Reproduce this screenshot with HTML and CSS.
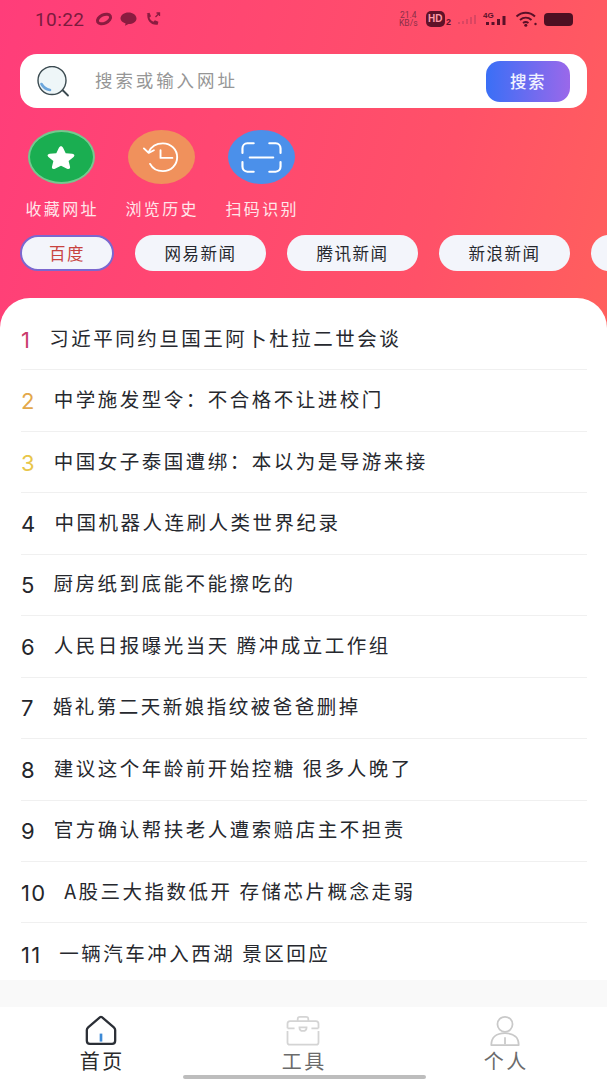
FILE: index.html
```html
<!DOCTYPE html>
<html lang="zh-CN">
<head>
<meta charset="utf-8">
<title>首页</title>
<link rel="stylesheet" href="styles.css">
</head>
<body>
<div class="page">
  <header class="hero">
    <div class="status">
      <div class="status-left">
        <span class="time">10:22</span>
        <svg class="si" width="18" height="14" viewBox="0 0 18 14"><ellipse cx="9" cy="7" rx="7" ry="4.200" transform="rotate(-25 9 7)" fill="none" stroke="#8a1c40" stroke-width="3"/></svg>
        <svg class="si" width="17" height="14" viewBox="0 0 17 14"><path d="M8.500 0.500c4.400 0 8 2.600 8 6s-3.600 5.600-8 5.600l-3.500 1.700.6-2.400C2.600 10.400.5 8.700.5 6.500c0-3.400 3.600-6 8-6z" fill="#8a1c40"/></svg>
        <svg class="si" width="18" height="15" viewBox="0 0 17 15"><path d="M2 1.500 5 .8l1.500 3.500-1.600 1.400c.8 1.800 2.200 3.200 4 4l1.500-1.500 3.500 1.500-.7 3c-6.500 1-11.500-4.500-10.200-11.700z" fill="#8a1c40"/><path d="M11 5l4-4M12 1h3v3" fill="none" stroke="#8a1c40" stroke-width="1.300"/></svg>
      </div>
      <div class="status-right">
        <span class="speed">21.4<br>KB/s</span>
        <span class="hd"><span class="hd-box">HD</span><span class="hd-num">2</span></span>
        <svg width="20" height="10" viewBox="0 0 20 10" class="faint"><path d="M1 8h2v2H1zM5 7h2v3H5zM9 5h2v5H9zM13 3h2v7h-2zM17 1h2v9h-2z" fill="#c2405f"/></svg>
        <svg width="26" height="16" viewBox="0 0 26 16"><text x="0" y="7" class="net">4G</text><path d="M3 11h3v3H3zM8.500 11h3v3h-3zM14 8h3v6h-3zM19.500 5h3v9h-3z" fill="#5a1028"/></svg>
        <svg width="23" height="16" viewBox="0 0 23 16"><path d="M1.500 5.500c5.500-5 13-5 18.500 0M5 9c3.500-3 8-3 11.500 0M8 12c1.600-1.200 3.800-1.200 5.500 0" fill="none" stroke="#5a1028" stroke-width="2"/><circle cx="10.800" cy="14.300" r="1.500" fill="#5a1028"/><circle cx="20.500" cy="13" r="1.200" fill="#5a1028"/></svg>
        <span class="battery"></span>
      </div>
    </div>

    <div class="search">
      <svg class="search-icon" width="36" height="32" viewBox="3 0 36 32">
        <circle cx="18" cy="14.500" r="14.500" fill="#eef6f8"/>
        <circle cx="18" cy="14.500" r="14" fill="none" stroke="#3b4a50" stroke-width="1.400"/>
        <path d="M29 24.500l5 5" stroke="#3b4a50" stroke-width="1.800" stroke-linecap="round"/>
        <path d="M7.500 18c2 3.600 4.800 5.300 8.500 6" fill="none" stroke="#6ba6dc" stroke-width="2.600" stroke-linecap="round"/>
      </svg>
      <span class="placeholder">搜索或输入网址</span>
      <button class="search-btn">搜索</button>
    </div>

    <div class="actions">
      <div class="action">
        <div class="circle c-green">
          <svg width="32" height="25" viewBox="0 0 34 30" preserveAspectRatio="none"><path d="M17 1.500c1 0 1.700.7 2.200 1.800l2.800 6.500 7 .8c2.400.3 3 2.100 1.400 3.700l-5.300 4.800 1.500 7c.4 2.200-1.200 3.400-3.200 2.300L17 24.800l-6.400 3.600c-2 1.100-3.600-.1-3.200-2.300l1.500-7L3.600 14.300C2 12.700 2.600 10.900 5 10.600l7-.8 2.800-6.500c.5-1.100 1.200-1.800 2.200-1.800z" fill="#fff"/></svg>
        </div>
        <span class="action-label">收藏网址</span>
      </div>
      <div class="action">
        <div class="circle c-orange">
          <svg width="38" height="31" viewBox="0 0 40 34" preserveAspectRatio="none"><path d="M7 11C10 4.500 16 1.500 22 1.500c8.500 0 15 6.800 15 15.200S30.500 32 22 32c-6 0-11-3-13.500-8" fill="none" stroke="#fff" stroke-width="2" stroke-linecap="round"/><path d="M2 7l5 5 5.500-3" fill="none" stroke="#fff" stroke-width="2" stroke-linecap="round" stroke-linejoin="round"/><path d="M19.500 9v8.500H32" fill="none" stroke="#fff" stroke-width="2" stroke-linecap="round" stroke-linejoin="round"/></svg>
        </div>
        <span class="action-label">浏览历史</span>
      </div>
      <div class="action">
        <div class="circle c-blue">
          <svg width="41" height="31" viewBox="0 0 42 34" preserveAspectRatio="none"><path d="M1.500 12V7c0-3 2-5.500 5-5.500H13M29 1.500h6.500c3 0 5 2.500 5 5.500v5M1.500 22v5c0 3 2 5.500 5 5.500H13M29 32.500h6.500c3 0 5-2.500 5-5.500v-5M9 17h24" fill="none" stroke="#fff" stroke-width="2.200" stroke-linecap="round"/></svg>
        </div>
        <span class="action-label">扫码识别</span>
      </div>
    </div>

    <div class="chips">
      <span class="chip chip-active">百度</span>
      <span class="chip">网易新闻</span>
      <span class="chip">腾讯新闻</span>
      <span class="chip">新浪新闻</span>
      <span class="chip"></span>
    </div>
  </header>

  <main class="panel">
    <ol class="list">
      <li class="row"><span class="num n1">1</span><span class="title">习近平同约旦国王阿卜杜拉二世会谈</span></li>
      <li class="row"><span class="num n2">2</span><span class="title">中学施发型令：不合格不让进校门</span></li>
      <li class="row"><span class="num n3">3</span><span class="title">中国女子泰国遭绑：本以为是导游来接</span></li>
      <li class="row"><span class="num">4</span><span class="title">中国机器人连刷人类世界纪录</span></li>
      <li class="row"><span class="num">5</span><span class="title">厨房纸到底能不能擦吃的</span></li>
      <li class="row"><span class="num">6</span><span class="title">人民日报曝光当天 腾冲成立工作组</span></li>
      <li class="row"><span class="num">7</span><span class="title">婚礼第二天新娘指纹被爸爸删掉</span></li>
      <li class="row"><span class="num">8</span><span class="title">建议这个年龄前开始控糖 很多人晚了</span></li>
      <li class="row"><span class="num">9</span><span class="title">官方确认帮扶老人遭索赔店主不担责</span></li>
      <li class="row"><span class="num">10</span><span class="title">A股三大指数低开 存储芯片概念走弱</span></li>
      <li class="row"><span class="num">11</span><span class="title">一辆汽车冲入西湖 景区回应</span></li>
    </ol>
  </main>

  <div class="strip"></div>

  <nav class="tabbar">
    <div class="tab tab-active">
      <svg width="34" height="31" viewBox="0 0 36 35"><path d="M17 2.500 3.500 14c-1 .9-1.500 1.800-1.500 3v12c0 2 1.300 3.500 3.500 3.500h25c2.200 0 3.500-1.500 3.500-3.500V17c0-1.200-.5-2.100-1.500-3L19 2.500c-.6-.5-1.400-.5-2 0z" fill="none" stroke="#2b2f36" stroke-width="2.600"/><rect x="16.500" y="21" width="3" height="9" fill="#3d8ad6"/></svg>
      <span class="tab-label">首页</span>
    </div>
    <div class="tab">
      <svg width="38" height="31" viewBox="0 0 38 35"><path d="M13 7V4.500C13 3 14 2 15.500 2h7C24 2 25 3 25 4.500V7" fill="none" stroke="#d4d4d4" stroke-width="2"/><path d="M1.500 15V10c0-1.800 1.200-3 3-3h29c1.800 0 3 1.200 3 3v5M1.500 18v13c0 1.500 1 2.500 2.500 2.500h30c1.500 0 2.500-1 2.500-2.500V18M1.500 15h8M28.500 15h8M14 14h10M15 14c0 3 1.500 4 4 4s4-1 4-4" fill="none" stroke="#d4d4d4" stroke-width="2"/></svg>
      <span class="tab-label">工具</span>
    </div>
    <div class="tab">
      <svg width="34" height="31" viewBox="0 0 34 35"><circle cx="17" cy="10.500" r="8.500" fill="none" stroke="#c9c9c9" stroke-width="2"/><path d="M1.500 34c0-8 5-13.500 15.500-13.500S32.500 26 32.500 34z" fill="none" stroke="#c9c9c9" stroke-width="2" stroke-linejoin="round"/><path d="M17 25v8" stroke="#c9c9c9" stroke-width="2"/></svg>
      <span class="tab-label">个人</span>
    </div>
    <span class="home-bar"></span>
  </nav>
</div>
</body>
</html>
```
FILE: styles.css
```css
* { box-sizing: border-box; }
html, body { margin: 0; padding: 0; }
body {
  font-family: "Noto Sans CJK SC", "Noto Sans", sans-serif;
  background: #fff;
}
.page {
  width: 607px;
  height: 1080px;
  overflow: hidden;
  display: flex;
  flex-direction: column;
  background: linear-gradient(105deg, #ff3d7a 0%, #ff5168 55%, #ff6e52 100%);
}
.hero { height: 298px; flex: none; overflow: hidden; }

.status {
  height: 54px;
  padding: 8px 34px 0 35px;
  display: flex;
  justify-content: space-between;
  align-items: flex-start;
}
.status-left, .status-right { display: flex; align-items: center; height: 22px; }
.status-left { gap: 7px; }
.time {
  font-family: Roboto, sans-serif;
  font-size: 19px;
  color: #7c1b3e;
  letter-spacing: .4px;
  margin-right: 4px;
}
.status-right { gap: 6px; }
.speed {
  font-family: Roboto, sans-serif;
  font-size: 8.500px;
  line-height: 8px;
  color: #8a2f48;
  text-align: center;
}
.hd { display: flex; align-items: flex-end; margin-left: 2px; }
.hd-box {
  font-family: "Liberation Sans", sans-serif;
  font-size: 10px;
  font-weight: 700;
  color: #ff9aa8;
  background: #5f1229;
  border-radius: 5px;
  padding: 2px 2.500px;
  line-height: 12px;
}
.hd-num {
  font-family: "Liberation Sans", sans-serif;
  font-size: 9px;
  font-weight: 700;
  color: #5f1229;
  line-height: 9px;
  margin-left: 1px;
}
.faint { opacity: .6; }
.net {
  font-family: "Liberation Sans", sans-serif;
  font-size: 8px;
  font-weight: 700;
  fill: #5a1028;
}
.battery {
  width: 29px;
  height: 13px;
  border-radius: 4px;
  background: #4d0f22;
}

.search {
  margin: 0 20px;
  height: 54px;
  background: #fff;
  border-radius: 17px;
  display: flex;
  align-items: center;
  padding: 0 17px 0 17px;
}
.search-icon { flex: none; margin-top: 2px; }
.placeholder {
  margin-left: 22px;
  flex: 1;
  font-size: 17.500px;
  letter-spacing: 2.900px;
  color: #969696;
  line-height: 26px;
  padding-bottom: 2px;
}
.search-btn {
  width: 84px;
  height: 41px;
  border: 0;
  border-radius: 14px;
  background: linear-gradient(90deg, #3a6ff6 0%, #9a68ea 100%);
  color: #f2f3ff;
  font-family: inherit;
  font-size: 16.500px;
  font-weight: 500;
  letter-spacing: 1.500px;
  padding: 0;
}

.actions {
  display: flex;
  margin: 22px 0 0 11px;
}
.action {
  width: 100px;
  display: flex;
  flex-direction: column;
  align-items: center;
}
.circle {
  height: 54px;
  width: 67px;
  border-radius: 50%;
  display: flex;
  align-items: center;
  justify-content: center;
}
.c-green { background: #1aae51; border: 2px solid #74c98f; }
.c-orange { background: #f0915c; }
.c-blue { background: #4b90ea; }
.action-label {
  margin-top: 13px;
  font-size: 16px;
  line-height: 22px;
  letter-spacing: 2.300px;
  margin-right: -2.300px;
  color: #ffe6ea;
}

.chips {
  display: flex;
  gap: 21px;
  margin: 16px 0 0 20px;
}
.chip {
  flex: none;
  width: 131px;
  height: 36px;
  border-radius: 18px;
  background: #f3f5fb;
  color: #26282e;
  font-size: 16.500px;
  letter-spacing: 1.500px;
  display: flex;
  align-items: center;
  justify-content: center;
}
.chip-active {
  width: 94px;
  border: 2.500px solid #7b68cf;
  color: #c8433f;
}

.panel {
  flex: 1;
  min-height: 0;
  background: #fff;
  border-radius: 30px 30px 0 0;
  padding: 11px 20px 0 21px;
  overflow: hidden;
}
.list { list-style: none; margin: 0; padding: 0; }
.row {
  height: 61.450px;
  padding-bottom: 2px;
  border-bottom: 1px solid #f0f0f0;
  display: flex;
  align-items: center;
  gap: 18px;
}
.row:last-child { border-bottom: 0; }
.num {
  font-family: Inter, sans-serif;
  font-size: 22px;
  font-weight: 400;
  letter-spacing: 1.200px;
  color: #24262b;
  padding-top: 3px;
}
.n1 { color: #c93a6c; }
.n2 { color: #e3a84a; }
.n3 { color: #e8c64a; }
.title {
  font-size: 19.500px;
  letter-spacing: 2.500px;
  color: #26282e;
  white-space: nowrap;
  padding-bottom: 2px;
}

.strip { height: 27px; flex: none; background: #f9f9f9; margin-top: -4px; position: relative; }

.tabbar {
  height: 73px;
  flex: none;
  background: #fff;
  display: flex;
  position: relative;
}
.tab {
  width: 202px;
  display: flex;
  flex-direction: column;
  align-items: center;
  padding-top: 8px;
}
.tab svg { display: block; height: 31px; }
.tab-label {
  font-size: 20px;
  line-height: 30px;
  letter-spacing: 2.500px;
  margin-right: -2.500px;
  color: #6b6b6b;
}
.tab-active .tab-label { color: #2b2b2b; }
.home-bar {
  position: absolute;
  left: 183px;
  bottom: 1px;
  width: 243px;
  height: 4px;
  border-radius: 2px;
  background: #bdbdbd;
}
```
